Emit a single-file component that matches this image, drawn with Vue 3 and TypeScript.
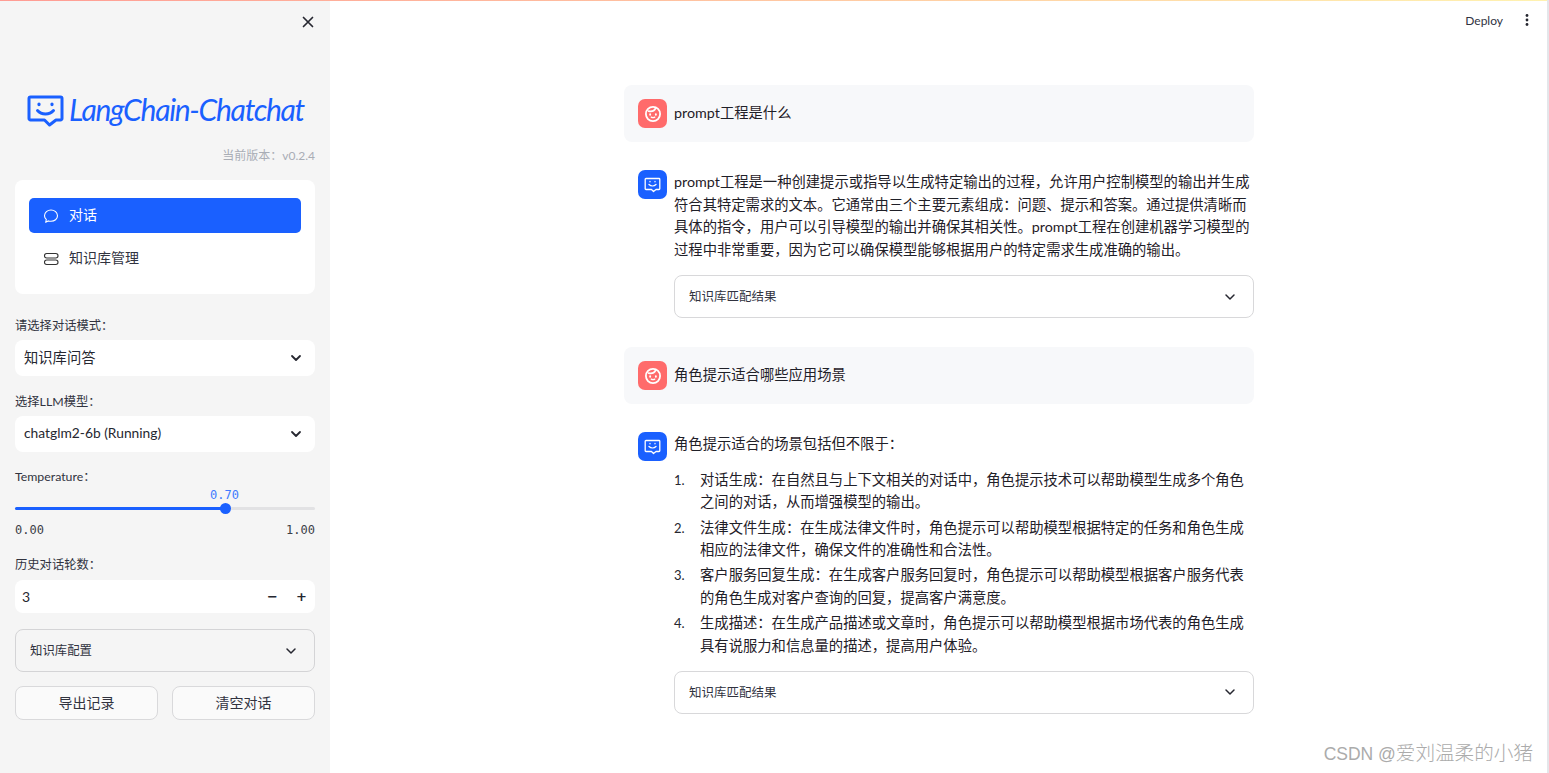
<script setup lang="ts">
const answer1: string[] = [
  'prompt工程是一种创建提示或指导以生成特定输出的过程，允许用户控制模型的输出并生成',
  '符合其特定需求的文本。它通常由三个主要元素组成：问题、提示和答案。通过提供清晰而',
  '具体的指令，用户可以引导模型的输出并确保其相关性。prompt工程在创建机器学习模型的',
  '过程中非常重要，因为它可以确保模型能够根据用户的特定需求生成准确的输出。',
]
const items: string[][] = [
  ['对话生成：在自然且与上下文相关的对话中，角色提示技术可以帮助模型生成多个角色', '之间的对话，从而增强模型的输出。'],
  ['法律文件生成：在生成法律文件时，角色提示可以帮助模型根据特定的任务和角色生成', '相应的法律文件，确保文件的准确性和合法性。'],
  ['客户服务回复生成：在生成客户服务回复时，角色提示可以帮助模型根据客户服务代表', '的角色生成对客户查询的回复，提高客户满意度。'],
  ['生成描述：在生成产品描述或文章时，角色提示可以帮助模型根据市场代表的角色生成', '具有说服力和信息量的描述，提高用户体验。'],
]
</script>

<template>
  <div class="page">
    <div class="decoration"></div>
    <aside class="sidebar">
      <div class="close-row">
        <svg width="14" height="14" viewBox="0 0 14 14" fill="none" stroke="#262730" stroke-width="1.7" stroke-linecap="round"><path d="M2.500 2.500l9 9M11.500 2.500l-9 9" /></svg>
      </div>
      <div class="logo">
        <svg width="37" height="32" viewBox="0 0 37 32" fill="none" stroke="#1a60ff" stroke-width="3" stroke-linejoin="round" stroke-linecap="round">
          <path d="M3.500 2h30a1.500 1.500 0 0 1 1.500 1.500v20a1.500 1.500 0 0 1-1.500 1.500H29l-6.500 5l-5-5H3.500A1.500 1.500 0 0 1 2 23.500v-20A1.500 1.500 0 0 1 3.500 2z" />
          <path d="M10.500 15.500c4 4.500 12 4.500 16 0" />
          <path d="M12 9v.6M25 9v.6" stroke-width="3.200" />
        </svg>
        <span class="logo-text">LangChain-Chatchat</span>
      </div>
      <div class="version">当前版本：v0.2.4</div>
      <nav class="nav-card">
        <div class="nav-item active">
          <svg width="16" height="16" viewBox="0 0 16 16" fill="none" stroke="#fff" stroke-width="1.100"><path d="M8 2c3.500 0 6.500 2.400 6.500 5.700S11.500 13.300 8 13.300c-.9 0-1.700-.1-2.500-.4L2.800 14l.5-2.700C2.100 10.300 1.500 9.100 1.500 7.700 1.500 4.400 4.500 2 8 2z" /></svg>
          <span>对话</span>
        </div>
        <div class="nav-item">
          <svg width="16" height="16" viewBox="0 0 16 16" fill="none" stroke="#333" stroke-width="1.100"><rect x="1.500" y="2.500" width="13.500" height="4.500" rx="2.200" /><rect x="1.500" y="9" width="13.500" height="4.500" rx="2.200" /></svg>
          <span>知识库管理</span>
        </div>
      </nav>

      <label class="label first">请选择对话模式：</label>
      <div class="select cjk">
        <span>知识库问答</span>
        <svg class="chev" width="12" height="8" viewBox="0 0 12 8" fill="none" stroke="#262730" stroke-width="1.800" stroke-linecap="round" stroke-linejoin="round"><path d="M2 2l4 4 4-4" /></svg>
      </div>
      <label class="label second">选择LLM模型：</label>
      <div class="select">
        <span>chatglm2-6b (Running)</span>
        <svg class="chev" width="12" height="8" viewBox="0 0 12 8" fill="none" stroke="#262730" stroke-width="1.800" stroke-linecap="round" stroke-linejoin="round"><path d="M2 2l4 4 4-4" /></svg>
      </div>
      <label class="label third">Temperature：</label>
      <div class="slider">
        <div class="slider-value">0.70</div>
        <div class="track">
          <div class="fill"></div>
          <div class="thumb"></div>
        </div>
        <div class="ticks"><span>0.00</span><span>1.00</span></div>
      </div>
      <label class="label fourth">历史对话轮数：</label>
      <div class="number">
        <span class="num-value">3</span>
        <span class="steps"><b>−</b><b>+</b></span>
      </div>
      <div class="config">
        <span>知识库配置</span>
        <svg width="12" height="8" viewBox="0 0 12 8" fill="none" stroke="#262730" stroke-width="1.500" stroke-linecap="round" stroke-linejoin="round"><path d="M2 2l4 4 4-4" /></svg>
      </div>
      <div class="buttons">
        <button class="btn">导出记录</button>
        <button class="btn">清空对话</button>
      </div>
    </aside>

    <main class="main">
      <header class="toolbar">
        <span class="deploy">Deploy</span>
        <svg width="4" height="14" viewBox="0 0 4 14" fill="#262730"><circle cx="2" cy="2.500" r="1.400" /><circle cx="2" cy="7" r="1.400" /><circle cx="2" cy="11.500" r="1.400" /></svg>
      </header>
      <section class="chat">
        <div class="msg user">
          <div class="avatar red">
            <svg width="18" height="18" viewBox="0 0 17 17" fill="none" stroke="#fff" stroke-width="1.700" stroke-linecap="round"><circle cx="8.500" cy="8.500" r="6.700" /><path d="M4.500 5.800c2.500.6 5 0 6.300-2.400" /><path d="M5.800 8.800v.4M11.200 8.800v.4" stroke-width="1.800" /><path d="M6.800 11.500c1.100.6 2.300.6 3.400 0" stroke-width="1.200" /></svg>
          </div>
          <p class="text single">prompt工程是什么</p>
        </div>
        <div class="msg bot first-bot">
          <div class="avatar blue">
            <svg width="17" height="16" viewBox="0 0 17 16" fill="none" stroke="#fff" stroke-width="1.300" stroke-linejoin="round" stroke-linecap="round"><path d="M2 1.500h13a.8.8 0 0 1 .8.8v9.400a.8.8 0 0 1-.8.8h-3L9.500 14.500l-2-2H2a.8.8 0 0 1-.8-.8V2.300a.8.8 0 0 1 .8-.8z" /><path d="M5 7.500c2 1.800 5 1.800 7 0" /><path d="M6 4.500v.3M11 4.500v.3" /></svg>
          </div>
          <div class="body">
            <p v-for="line in answer1" :key="line" class="text line">{{ line }}</p>
            <div class="expander gap-a">
              <span>知识库匹配结果</span>
              <svg width="12" height="8" viewBox="0 0 12 8" fill="none" stroke="#262730" stroke-width="1.500" stroke-linecap="round" stroke-linejoin="round"><path d="M2 2l4 4 4-4" /></svg>
            </div>
          </div>
        </div>
        <div class="msg user second-user">
          <div class="avatar red">
            <svg width="18" height="18" viewBox="0 0 17 17" fill="none" stroke="#fff" stroke-width="1.700" stroke-linecap="round"><circle cx="8.500" cy="8.500" r="6.700" /><path d="M4.500 5.800c2.500.6 5 0 6.300-2.400" /><path d="M5.800 8.800v.4M11.200 8.800v.4" stroke-width="1.800" /><path d="M6.800 11.500c1.100.6 2.300.6 3.400 0" stroke-width="1.200" /></svg>
          </div>
          <p class="text single">角色提示适合哪些应用场景</p>
        </div>
        <div class="msg bot second-bot">
          <div class="avatar blue">
            <svg width="17" height="16" viewBox="0 0 17 16" fill="none" stroke="#fff" stroke-width="1.300" stroke-linejoin="round" stroke-linecap="round"><path d="M2 1.500h13a.8.8 0 0 1 .8.8v9.400a.8.8 0 0 1-.8.8h-3L9.500 14.500l-2-2H2a.8.8 0 0 1-.8-.8V2.300a.8.8 0 0 1 .8-.8z" /><path d="M5 7.500c2 1.800 5 1.800 7 0" /><path d="M6 4.500v.3M11 4.500v.3" /></svg>
          </div>
          <div class="body">
            <p class="text line">角色提示适合的场景包括但不限于：</p>
            <ol class="list">
              <li v-for="(item, i) in items" :key="i" class="list-item">
                <span class="idx">{{ i + 1 }}.</span>
                <div>
                  <p v-for="l in item" :key="l" class="text line">{{ l }}</p>
                </div>
              </li>
            </ol>
            <div class="expander gap-b">
              <span>知识库匹配结果</span>
              <svg width="12" height="8" viewBox="0 0 12 8" fill="none" stroke="#262730" stroke-width="1.500" stroke-linecap="round" stroke-linejoin="round"><path d="M2 2l4 4 4-4" /></svg>
            </div>
          </div>
        </div>
      </section>
    </main>
    <div class="watermark"><span class="wm-latin">CSDN @</span>爱刘温柔的小猪</div>
  </div>
</template>

<style scoped>
.page {
  position: relative;
  display: flex;
  width: 1549px;
  height: 773px;
  overflow: hidden;
  background: #fff;
  color: #262730;
  font-family: "Lato", "Noto Sans CJK SC", sans-serif;
  box-sizing: border-box;
  border-right: 2px solid #e4e6ea;
}
.decoration {
  position: absolute;
  top: 0;
  left: 0;
  right: 0;
  height: 1px;
  background: linear-gradient(90deg, #ff9c94, #fff2b0);
}
.sidebar {
  width: 330px;
  flex: none;
  box-sizing: border-box;
  padding: 0 15px;
  background: #f5f5f5;
}
.close-row {
  display: flex;
  justify-content: flex-end;
  padding: 15px 0 0;
  height: 30px;
  box-sizing: border-box;
}
.logo {
  display: flex;
  align-items: center;
  margin-top: 65px;
  margin-left: 12px;
  height: 32px;
  gap: 5px;
}
.logo-text {
  font-family: "Lato", sans-serif;
  font-style: italic;
  font-size: 30px;
  font-weight: 400;
  color: #1a60ff;
  line-height: 28px;
  padding-bottom: 4px;
  white-space: nowrap;
  letter-spacing: -1.300px;
}
.version {
  margin-top: 20px;
  text-align: right;
  font-size: 12px;
  line-height: 17px;
  color: #a9adb5;
}
.nav-card {
  margin-top: 16px;
  background: #fff;
  border-radius: 8px;
  height: 114px;
  box-sizing: border-box;
  padding: 18px 14px 0;
}
.nav-item {
  display: flex;
  align-items: center;
  height: 35px;
  padding-left: 14px;
  gap: 10px;
  font-size: 14px;
  border-radius: 5px;
  color: #31333f;
}
.nav-item span {
  margin-top: -4px;
}
.nav-item + .nav-item {
  margin-top: 8px;
}
.nav-item.active {
  background: #1a60ff;
  color: #fff;
}
.label {
  display: block;
  font-size: 12.300px;
  line-height: 16px;
  color: #31333f;
  white-space: nowrap;
}
.label.first { margin-top: 24px; }
.label.second { margin-top: 18px; }
.label.third { margin-top: 17px; }
.label.fourth { margin-top: 20px; }
.select {
  display: flex;
  align-items: center;
  justify-content: space-between;
  height: 36px;
  margin-top: 6px;
  padding: 0 13px 0 9px;
  box-sizing: border-box;
  background: #fff;
  border-radius: 8px;
  font-size: 13.800px;
  color: #262730;
}
.select span {
  margin-top: -3px;
}
.select.cjk { font-size: 14.300px; }
.slider {
  margin-top: 3px;
}
.slider-value {
  margin-left: 195px;
  font-family: "DejaVu Sans Mono", monospace;
  font-size: 12px;
  line-height: 14px;
  color: #3f7bff;
}
.track {
  position: relative;
  height: 3px;
  margin-top: 5px;
  border-radius: 2px;
  background: #e2e2e4;
}
.fill {
  height: 100%;
  width: 210px;
  border-radius: 2px;
  background: #1a60ff;
}
.thumb {
  position: absolute;
  top: -4px;
  left: 205px;
  width: 11px;
  height: 11px;
  border-radius: 50%;
  background: #1a60ff;
}
.ticks {
  display: flex;
  justify-content: space-between;
  margin-top: 13px;
  font-family: "DejaVu Sans Mono", monospace;
  font-size: 12px;
  line-height: 14px;
  color: #3c3e47;
}
.number {
  display: flex;
  align-items: center;
  justify-content: space-between;
  height: 33px;
  margin-top: 7px;
  padding: 0 10px 0 7px;
  background: #fff;
  border-radius: 8px;
  font-size: 14px;
}
.steps {
  display: flex;
  gap: 20px;
}
.steps b {
  width: 9px;
  text-align: center;
  font-family: "DejaVu Sans", sans-serif;
  font-size: 13px;
  font-weight: 700;
}
.config {
  display: flex;
  align-items: center;
  justify-content: space-between;
  height: 43px;
  box-sizing: border-box;
  margin-top: 16px;
  padding: 0 17px 0 14px;
  border: 1px solid #d4d4d6;
  border-radius: 8px;
  font-size: 12.400px;
  color: #31333f;
}
.config span,
.expander span {
  margin-top: -2px;
}
.buttons {
  display: flex;
  justify-content: space-between;
  margin-top: 14px;
}
.btn {
  width: 143px;
  height: 34px;
  padding: 0 0 3px;
  border: 1px solid #d9d9db;
  border-radius: 8px;
  background: #fafafa;
  font-family: inherit;
  font-size: 14px;
  color: #31333f;
}
.main {
  flex: 1;
  min-width: 0;
  position: relative;
}
.toolbar {
  display: flex;
  align-items: center;
  justify-content: flex-end;
  gap: 22px;
  height: 20px;
  padding: 10px 18px 1px 0;
}
.deploy {
  font-size: 12px;
  color: #31333f;
}
.chat {
  width: 630px;
  margin: 54px 0 0 294px;
}
.msg {
  display: flex;
  padding: 0 0 0 14px;
  gap: 7px;
}
.msg.user {
  align-items: center;
  height: 57px;
  background: #f7f8fa;
  border-radius: 8px;
}
.msg.bot { align-items: flex-start; }
.first-bot { margin-top: 28px; }
.second-user { margin-top: 29px; }
.second-bot { margin-top: 28px; }
.avatar {
  flex: none;
  display: flex;
  align-items: center;
  justify-content: center;
  width: 29px;
  height: 29px;
  border-radius: 7px;
}
.avatar.red { background: #ff6b6b; }
.avatar.blue { background: #1a60ff; }
.body { width: 580px; padding-top: 1px; }
.text {
  margin: 0;
  font-size: 14.320px;
  color: #1f2028;
  white-space: nowrap;
}
.text.single { line-height: 21px; padding-bottom: 2px; }
.text.line { line-height: 22.500px; }
.expander {
  display: flex;
  align-items: center;
  justify-content: space-between;
  box-sizing: border-box;
  height: 43px;
  padding: 0 17px 0 14px;
  border: 1px solid #d8d8da;
  border-radius: 8px;
  font-size: 12.500px;
  color: #31333f;
}
.gap-a { margin-top: 14.400px; }
.gap-b { margin-top: 13.500px; }
.list {
  list-style: none;
  margin: 13px 0 0;
  padding: 0;
}
.list-item {
  display: flex;
}
.list-item + .list-item { margin-top: 2.800px; }
.idx {
  width: 26px;
  flex: none;
  font-size: 13px;
  line-height: 22.500px;
}
.watermark {
  position: absolute;
  right: 14px;
  bottom: 7px;
  font-family: "Liberation Sans", "Noto Sans CJK SC", sans-serif;
  font-size: 19.600px;
  font-weight: 300;
  line-height: 24px;
  color: #ababab;
  white-space: nowrap;
}
.wm-latin {
  font-size: 17.500px;
  font-weight: 400;
}
</style>
